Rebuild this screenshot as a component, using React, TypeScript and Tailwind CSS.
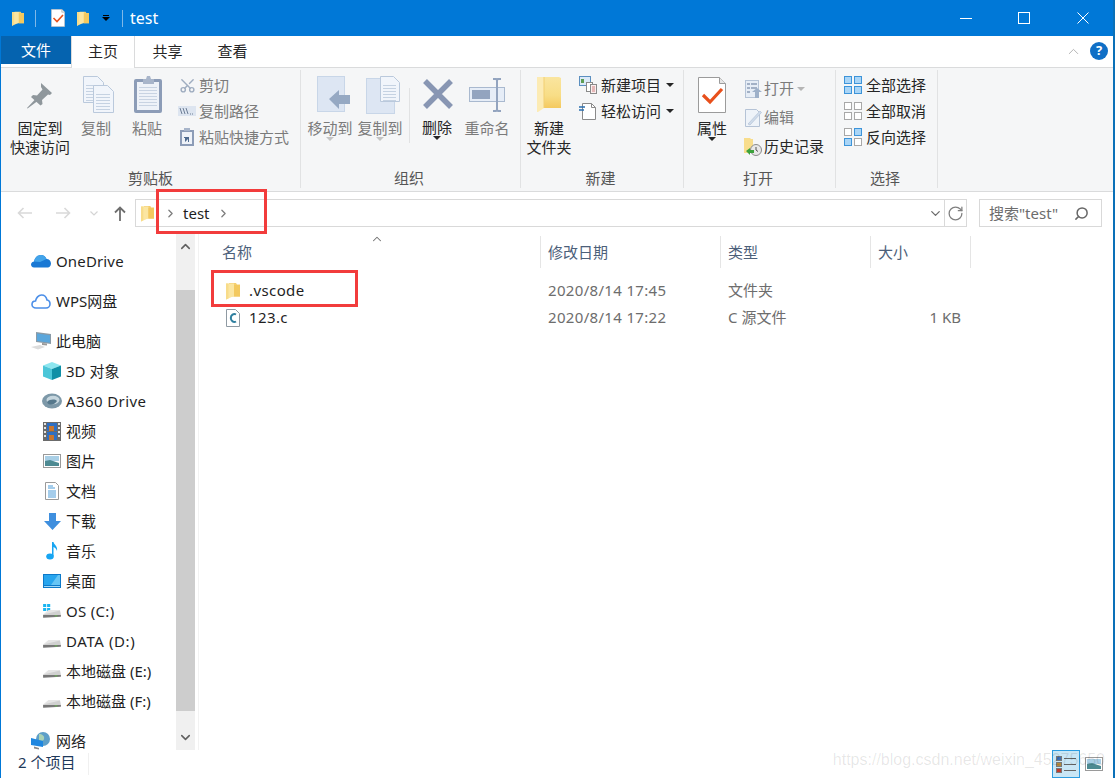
import { ReactNode } from 'react';
import { ChevronDown, ChevronRight, ChevronUp, RotateCw, Scissors, Search } from 'lucide-react';

function Folder({ className = 'w-[14px] h-[18px]' }: { className?: string }) {
  return (
    <svg viewBox="0 0 14 18" className={className}>
      <path d="M3 1h7l1 1.500h3V14.500H3z" fill="#f5cf6f" />
      <path d="M0 1.500h8V14L0 17.500z" fill="#fbe6a2" />
      <path d="M0 1.500h2.500V16.400L0 17.500z" fill="#f8dc8a" />
      <path d="M8 3h6v11.500H8z" fill="#f3c95f" />
    </svg>
  );
}

function BigFolder() {
  return (
    <svg viewBox="0 0 24 36" className="w-[24px] h-[36px]">
      <defs>
        <linearGradient id="bigFolderFace" x1="0" y1="0" x2="0" y2="1">
          <stop offset="0" stopColor="#fae59f" />
          <stop offset="0.6" stopColor="#f8dd86" />
          <stop offset="1" stopColor="#f4c95f" />
        </linearGradient>
      </defs>
      <path d="M0 0h22l2 1v30H0z" fill="url(#bigFolderFace)" />
      <path d="M0 0h7v31L1 35 0 35z" fill="#fcebb4" />
      <path d="M7 0v31" stroke="#f2cf72" />
    </svg>
  );
}

function CheckDoc({ size = 'w-[16px] h-[18px]' }: { size?: string }) {
  return (
    <svg viewBox="0 0 28 36" className={size}>
      <path d="M.5.5h21l6 6v29H.5z" fill="#fff" stroke="#9b9b9b" />
      <path d="M21.500.5v6h6" fill="#e6e6e6" stroke="#9b9b9b" />
      <path d="M5 18l7 7L24 12" fill="none" stroke="#e8501c" strokeWidth="3.200" />
    </svg>
  );
}

function Pin() {
  return (
    <svg viewBox="0 0 28 28" className="w-[28px] h-[28px]">
      <path d="M15 2l11 10-2 2-2-.5-6 5.500.5 4-2 1.500L5 16l2-2 4 .5 5.500-6L15 6z" fill="#8f979c" />
      <path d="M9 18.500L1 27l.5.5L11 20.500z" fill="#8f979c" />
    </svg>
  );
}

function Page({ x, y, w = 20, h = 28 }: { x: number; y: number; w?: number; h?: number }) {
  return (
    <g>
      <path d={`M${x}.5 ${y}.5h${w - 6}l6 6v${h - 6}h-${w}z`} fill="#f1f5fb" stroke="#bac9dc" />
      {[9, 12, 15, 18, 21, 24].map(d => (
        <path key={d} d={`M${x + 3} ${y + d}.5h${w - 6}`} stroke="#c5d2e2" />
      ))}
    </g>
  );
}

function CopyIcon() {
  return (
    <svg viewBox="0 0 31 37" className="w-[31px] h-[37px] ml-[4px]">
      <Page x={0} y={0} w={20} h={26} />
      <Page x={10} y={9} w={20} h={27} />
    </svg>
  );
}

function PasteIcon() {
  return (
    <svg viewBox="0 0 28 37" className="w-[28px] h-[37px] ml-[2px]">
      <rect x="0" y="3" width="28" height="34" rx="2" fill="#8c9cb7" />
      <rect x="3" y="6" width="22" height="28" fill="#eef2f8" />
      {[11, 14, 17, 20, 23, 26, 29].map(d => (
        <path key={d} d={`M5 ${d}.5h18`} stroke="#c8d3e2" />
      ))}
      <path d="M9 3h3l1-3h3l1 3h3v5H9z" fill="#a8b5ca" />
    </svg>
  );
}

function PathIcon() {
  return (
    <svg viewBox="0 0 18 10" className="w-[18px] h-[10px]">
      <rect width="18" height="10" fill="#dde5f0" />
      <path d="M2 2l2 6M5 2l2 6M8 2l2 6" stroke="#6d7e96" strokeWidth="1" />
      <path d="M12 8h1M14 8h1" stroke="#6d7e96" />
    </svg>
  );
}

function PasteLinkIcon() {
  return (
    <svg viewBox="0 0 14 18" className="w-[14px] h-[18px]">
      <rect y="2" width="14" height="16" fill="#8c9cb7" />
      <rect x="2" y="4" width="10" height="12" fill="#eef2f8" />
      <path d="M4 0h6v3H4z" fill="#a8b5ca" />
      <path d="M5 14v-4l-1 0 0-1h5v5h-1v-3l-3 3z" fill="#4e6a8e" />
    </svg>
  );
}

function MoveIcon() {
  return (
    <svg viewBox="0 0 33 37" className="w-[33px] h-[37px] ml-[6px]">
      <rect x=".5" y=".5" width="27" height="35" fill="#dde6f3" stroke="#c8d6e8" />
      <path d="M12 23L22 14v5h11v9H22v5z" fill="#96a9c3" />
    </svg>
  );
}

function CopyToIcon() {
  return (
    <svg viewBox="0 0 34 38" className="w-[34px] h-[38px] ml-[6px]">
      <rect x=".5" y="2.500" width="28" height="35" fill="#dde6f3" stroke="#c8d6e8" />
      <Page x={14} y={0} w={19} h={25} />
    </svg>
  );
}

function DeleteIcon() {
  return (
    <svg viewBox="0 0 32 32" className="w-[32px] h-[32px] ml-[1px]">
      <path d="M3 3l26 26M29 3L3 29" stroke="#8896b3" strokeWidth="5.500" />
    </svg>
  );
}

function RenameIcon() {
  return (
    <svg viewBox="0 0 36 34" className="w-[36px] h-[34px]">
      <rect x=".5" y="9.500" width="35" height="14" fill="#e6edf7" stroke="#a9b9cf" />
      <rect x="3" y="12" width="18" height="9" fill="#93a4bf" />
      <path d="M24 1h3l1 1 1-1h3M28 2v30M24 33h3l1-1 1 1h3" fill="none" stroke="#93a4bf" strokeWidth="2" />
    </svg>
  );
}

function NewItemIcon() {
  return (
    <svg viewBox="0 0 18 18" className="w-[18px] h-[18px]">
      <rect x=".5" y=".5" width="11" height="9" fill="#dceaf8" stroke="#5b8fc0" />
      <rect x="2" y="3" width="3" height="4" fill="#5e9e55" />
      <rect x="7.500" y="6.500" width="6" height="9" fill="#fff" stroke="#8a8a8a" />
      <rect x="11.500" y="8.500" width="6" height="9" fill="#fbeeee" stroke="#8a8a8a" />
      <path d="M13 11h3M13 13h3M13 15h3" stroke="#d08080" />
    </svg>
  );
}

function EasyAccessIcon() {
  return (
    <svg viewBox="0 0 18 18" className="w-[18px] h-[18px]">
      <path d="M3.500 1.500h9l4 4v12h-13z" fill="#fff" stroke="#8a8a8a" />
      <path d="M12.500 1.500v4h4" fill="none" stroke="#8a8a8a" />
      <path d="M0 5h6M0 8h5" stroke="#2a6fb0" strokeWidth="1.500" />
    </svg>
  );
}

function OpenIcon() {
  return (
    <svg viewBox="0 0 17 18" className="w-[17px] h-[18px]">
      <rect x=".5" y=".5" width="13" height="17" fill="#e6edf6" stroke="#b5c3d6" />
      <path d="M2 3h3v2H2zM6 3h6v2H6zM2 7h3v2H2zM6 7h6v2H6zM2 11h3v2H2z" fill="#a3b1c6" />
      <path d="M7 12l5-4 5 4h-3v6h-4v-6z" fill="#9db0c9" />
    </svg>
  );
}

function EditIcon() {
  return (
    <svg viewBox="0 0 17 18" className="w-[17px] h-[18px]">
      <path d="M.5.5h11l3 3v14H.5z" fill="#eef3f9" stroke="#b5c3d6" />
      <path d="M3 15L15 2l1.500 1.500L5 16z" fill="#cfdcec" stroke="#b5c3d6" strokeWidth=".7" />
    </svg>
  );
}

function HistoryIcon() {
  return (
    <svg viewBox="0 0 18 18" className="w-[18px] h-[18px]">
      <path d="M0 0h6l1 1h2v14H0z" fill="#f8dd8c" />
      <circle cx="12" cy="12" r="5.500" fill="#e8e8e8" stroke="#8a8a8a" />
      <path d="M12 9v3l2 1.500" stroke="#555" fill="none" />
      <path d="M2 13l4-3v2h4v3H6v2z" fill="#3ca23c" />
    </svg>
  );
}

function GridIcon({ on }: { on: number[] }) {
  const cells = [
    [0, 0],
    [10, 0],
    [0, 10],
    [10, 10],
  ];
  return (
    <svg viewBox="0 0 18 18" className="w-[18px] h-[18px]">
      {cells.map(([x, y], i) => (
        <rect
          key={i}
          x={x + 0.5}
          y={y + 0.5}
          width="7"
          height="7"
          fill={on.includes(i) ? '#a9d5f7' : '#fff'}
          stroke={on.includes(i) ? '#3d94d9' : '#a8a8a8'}
        />
      ))}
    </svg>
  );
}

function Caret({ className = '' }: { className?: string }) {
  return <span className={`inline-block w-0 h-0 border-x-[4px] border-x-transparent border-t-[4px] ${className}`} />;
}

function BigButton({
  icon,
  lines,
  dim,
  caret,
  width,
  className = '',
}: {
  icon: ReactNode;
  lines: string[];
  dim?: boolean;
  caret?: boolean;
  width: string;
  className?: string;
}) {
  return (
    <div className={`flex flex-col items-center ${width} ${className} ${dim ? 'text-[#7b7b7b]' : 'text-[#262626]'}`}>
      <div className="h-[49px] flex items-center justify-center shrink-0">{icon}</div>
      {lines.map(l => (
        <div key={l} className="leading-[19px] whitespace-nowrap">
          {l}
        </div>
      ))}
      {caret && <Caret className={`-mt-[1px] ${dim ? 'border-t-[#c4c4c4]' : 'border-t-[#262626]'}`} />}
    </div>
  );
}

function SmallButton({
  icon,
  label,
  dim,
  caret,
  height = 'h-[26px]',
  gap = 'gap-[4px]',
}: {
  icon: ReactNode;
  label: string;
  dim?: boolean;
  caret?: boolean;
  height?: string;
  gap?: string;
}) {
  return (
    <div className={`flex items-center whitespace-nowrap ${height} ${gap} ${dim ? 'text-[#7b7b7b]' : 'text-[#262626]'}`}>
      <div className="w-[18px] flex items-center justify-center shrink-0">{icon}</div>
      <span>{label}</span>
      {caret && <Caret className={`ml-[1px] ${dim ? 'border-t-[#b5b5b5]' : 'border-t-[#262626]'}`} />}
    </div>
  );
}

function Group({ label, width, labelClass = 'pr-[3px]', children }: { label: string; width: string; labelClass?: string; children: ReactNode }) {
  return (
    <div className={`${width} h-[118px] flex flex-col border-r border-[#e1e2e3] shrink-0`}>
      <div className="h-[98px] flex">{children}</div>
      <div className={`h-[20px] leading-[20px] text-center text-[#555] ${labelClass}`}>{label}</div>
    </div>
  );
}

function Ribbon() {
  return (
    <div className="h-[124px] bg-[#f5f6f7] border-b border-[#dadbdc] pt-[2px] flex text-[15px]">
      <Group label="剪贴板" width="w-[300px]" labelClass="">
        <BigButton icon={<Pin />} lines={['固定到', '快速访问']} width="w-[60px]" className="ml-[9px]" />
        <BigButton icon={<CopyIcon />} lines={['复制']} dim width="w-[40px]" className="ml-[6px]" />
        <BigButton icon={<PasteIcon />} lines={['粘贴']} dim width="w-[40px]" className="ml-[11px]" />
        <div className="ml-[11px] pt-[2px]">
          <SmallButton dim label="剪切" gap="gap-[3px]" icon={<Scissors size={17} className="text-[#9fadc0] -rotate-90" />} />
          <SmallButton dim label="复制路径" gap="gap-[3px]" icon={<PathIcon />} />
          <SmallButton dim label="粘贴快捷方式" gap="gap-[3px]" icon={<PasteLinkIcon />} />
        </div>
      </Group>
      <Group label="组织" width="w-[220px]">
        <BigButton icon={<MoveIcon />} lines={['移动到']} dim caret width="w-[50px]" className="ml-[4px]" />
        <BigButton icon={<CopyToIcon />} lines={['复制到']} dim caret width="w-[50px]" />
        <div className="w-px h-[55px] mt-[18px] ml-[4px] bg-[#e1e2e3]" />
        <BigButton icon={<DeleteIcon />} lines={['删除']} caret width="w-[40px]" className="ml-[7px] -mt-[1px]" />
        <BigButton icon={<RenameIcon />} lines={['重命名']} dim width="w-[50px]" className="ml-[5px]" />
      </Group>
      <Group label="新建" width="w-[163px]">
        <BigButton icon={<BigFolder />} lines={['新建', '文件夹']} width="w-[50px]" className="ml-[3px]" />
        <div className="ml-[5px] pt-[2px]">
          <SmallButton label="新建项目" caret icon={<NewItemIcon />} />
          <SmallButton label="轻松访问" caret icon={<EasyAccessIcon />} />
        </div>
      </Group>
      <Group label="打开" width="w-[152px]">
        <BigButton icon={<CheckDoc size="w-[28px] h-[36px]" />} lines={['属性']} caret width="w-[40px]" className="ml-[8px]" />
        <div className="ml-[12px] pt-[4px]">
          <SmallButton dim label="打开" caret height="h-[29px]" gap="gap-[2px]" icon={<OpenIcon />} />
          <SmallButton dim label="编辑" height="h-[29px]" gap="gap-[2px]" icon={<EditIcon />} />
          <SmallButton label="历史记录" height="h-[29px]" gap="gap-[2px]" icon={<HistoryIcon />} />
        </div>
      </Group>
      <Group label="选择" width="w-[102px]">
        <div className="ml-[8px] pt-[2px]">
          <SmallButton label="全部选择" icon={<GridIcon on={[0, 1, 2, 3]} />} />
          <SmallButton label="全部取消" icon={<GridIcon on={[]} />} />
          <SmallButton label="反向选择" icon={<GridIcon on={[1, 2]} />} />
        </div>
      </Group>
    </div>
  );
}

function AddressBar() {
  return (
    <div className="h-[40px] flex items-start pt-[7px] text-[15px] bg-white">
      <div className="w-[134px] h-[28px] flex items-center shrink-0">
        <svg viewBox="0 0 15 12" className="ml-[16px] w-[15px] h-[12px] shrink-0">
          <path d="M15 6H1.500M6.500 1L1.500 6l5 5" fill="none" stroke="#d9d9d9" strokeWidth="1.600" />
        </svg>
        <svg viewBox="0 0 15 12" className="ml-[24px] w-[15px] h-[12px] shrink-0">
          <path d="M0 6h13.500M8.500 1l5 5-5 5" fill="none" stroke="#d9d9d9" strokeWidth="1.600" />
        </svg>
        <svg viewBox="0 0 8 5" className="ml-[19px] w-[8px] h-[5px] shrink-0">
          <path d="M.5.5L4 4 7.500.5" fill="none" stroke="#d4d4d4" strokeWidth="1.200" />
        </svg>
        <svg viewBox="0 0 12 15" className="ml-[16px] w-[12px] h-[15px] shrink-0">
          <path d="M6 15V1.500M1 6.500l5-5 5 5" fill="none" stroke="#6e6e6e" strokeWidth="1.800" />
        </svg>
      </div>
      <div className="w-[832px] h-[28px] flex items-center border border-[#d9d9d9] shrink-0">
        <Folder className="ml-[5px] w-[13px] h-[17px]" />
        <ChevronRight size={13} strokeWidth={2.4} className="ml-[10px] text-[#7d7d7d]" />
        <span className="ml-[6px] text-[#1f1f1f]">test</span>
        <ChevronRight size={13} strokeWidth={2.4} className="ml-[8px] text-[#7d7d7d]" />
        <div className="flex-1" />
        <ChevronDown size={15} strokeWidth={2} className="text-[#6b6b6b]" />
        <div className="w-px h-full bg-[#d9d9d9] ml-[1px]" />
        <RotateCw size={17} strokeWidth={1.8} className="mx-[2px] text-[#7f7f7f]" />
      </div>
      <div className="ml-[12px] w-[123px] h-[28px] flex items-center border border-[#d9d9d9] shrink-0 pl-[9px] pr-[12px] justify-between">
        <span className="text-[#6d6d6d]">搜索"test"</span>
        <Search size={15} strokeWidth={2.4} className="text-[#666] -scale-x-100" />
      </div>
    </div>
  );
}

function DriveIcon({ win }: { win?: boolean }) {
  return (
    <svg viewBox="0 0 20 18" className="w-[18px] h-[16px]">
      {win && <path d="M0 1h3.500v3.500H0zM4.500 1H8v3.500H4.500zM0 5.500h3.500V9H0zM4.500 5.500H8V9H4.500z" fill="#19b5f1" />}
      <path d="M0 13l6-5h13l-1 5z" fill="#e6e6e6" />
      <path d="M19 8.500L20 13v1.500L0 16v-3z" fill="#d0d0d0" />
      <path d="M0 13.500h20v2L0 16.500z" fill="#777" />
      <rect x="13" y="14" width="3" height="1" fill="#69c24f" />
    </svg>
  );
}

const navIcons: Record<string, ReactNode> = {
  onedrive: (
    <svg viewBox="0 0 20 14" className="w-[20px] h-[14px]">
      <path d="M3 13.500C1 13.500 0 12 0 10.500 0 8.500 2 7.500 3 7.500 4 3 7 1 10 1c2.500 0 4.500 1.500 5.500 4 2.500 0 4.500 2 4.500 4.500s-2 4-3 4z" fill="#1978d4" />
      <path d="M3 7.500C4 3 7 1 10 1c2.500 0 4.500 1.500 5.500 4L9 8z" fill="#43a4ea" />
    </svg>
  ),
  wps: (
    <svg viewBox="0 0 20 15" className="w-[20px] h-[15px]">
      <path d="M5 14C2.500 14 1 12.500 1 10.500S2.500 7 4.500 7C5 4 7.500 1 10.500 1c3 0 5 2.500 5.500 5 2 .2 3 2 3 4s-1.500 4-4 4z" fill="#fff" stroke="#4c8fe8" strokeWidth="1.600" />
    </svg>
  ),
  pc: (
    <svg viewBox="0 0 20 18" className="w-[20px] h-[18px]">
      <path d="M5 0l15 2v10L5 10z" fill="#8a9aa6" />
      <path d="M6 1.500l13 1.700v7.600L6 9z" fill="#5ba7dc" />
      <path d="M0 15l9-2 5 2-7 2.500z" fill="#dcdcdc" />
      <path d="M11 11l5 .6v2L11 13z" fill="#9a9a9a" />
    </svg>
  ),
  cube: (
    <svg viewBox="0 0 18 18" className="w-[18px] h-[18px]">
      <path d="M9 0l9 3.500L9 7 0 3.500z" fill="#8de6ef" />
      <path d="M0 3.500L9 7v11l-9-3.500z" fill="#4cc6d8" />
      <path d="M18 3.500L9 7v11l9-3.500z" fill="#0f8fa6" />
    </svg>
  ),
  a360: (
    <svg viewBox="0 0 20 16" className="w-[20px] h-[16px]">
      <ellipse cx="10" cy="8" rx="10" ry="7.500" fill="#7d98a8" />
      <ellipse cx="11" cy="7" rx="6.500" ry="4.200" fill="#c6d6de" />
      <path d="M5 9c3-3 8-3 10-1-1 2-4 4-7 3.500-1.500-.2-2.500-1.200-3-2.500z" fill="#56788c" />
    </svg>
  ),
  video: (
    <svg viewBox="0 0 18 19" className="w-[18px] h-[19px]">
      <rect width="18" height="19" fill="#6b6b6b" />
      <path d="M1 1h2v2H1zM1 5h2v2H1zM1 9h2v2H1zM1 13h2v2H1zM15 1h2v2h-2zM15 5h2v2h-2zM15 9h2v2h-2zM15 13h2v2h-2z" fill="#e5e5e5" />
      <rect x="4" y="1" width="10" height="8" fill="#2f6fc2" />
      <rect x="4" y="10" width="10" height="8" fill="#2f6fc2" />
      <path d="M6 4h5v5H6zM6 13h5v5H6z" fill="#c9762e" />
    </svg>
  ),
  picture: (
    <svg viewBox="0 0 18 14" className="w-[18px] h-[14px]">
      <rect x=".5" y=".5" width="17" height="13" fill="#fff" stroke="#9a9a9a" />
      <rect x="2" y="2" width="14" height="5" fill="#a9cfe6" />
      <path d="M2 7l5-1 9 3v3H2z" fill="#4d8a92" />
    </svg>
  ),
  doc: (
    <svg viewBox="0 0 14 18" className="w-[14px] h-[18px]">
      <path d="M.5.5h10l3 3v14H.5z" fill="#fff" stroke="#9a9a9a" />
      <path d="M3 4h5M3 6h7M3 9h8M3 11h8M3 13h8M3 15h8" stroke="#4a9bd8" />
    </svg>
  ),
  download: (
    <svg viewBox="0 0 17 17" className="w-[17px] h-[17px]">
      <path d="M5 0h7v8h5l-8.500 9L0 8h5z" fill="#3f8fde" />
    </svg>
  ),
  music: (
    <svg viewBox="0 0 12 18" className="w-[12px] h-[18px]">
      <ellipse cx="4" cy="14.500" rx="3.800" ry="3" fill="#17a5f2" />
      <path d="M6 14V0h1.500c.5 3 4.500 4 3.500 9-.5-2.500-2.500-3.500-3.500-4v9z" fill="#17a5f2" />
    </svg>
  ),
  desktop: (
    <svg viewBox="0 0 18 14" className="w-[18px] h-[14px]">
      <rect width="18" height="14" fill="#0d79c9" />
      <path d="M1 1h16v10H1z" fill="#27a5ee" />
      <path d="M8 11l7-10h2v10z" fill="#66c5f5" />
      <path d="M1 12h16v1H1z" fill="#9fd8f7" />
    </svg>
  ),
  network: (
    <svg viewBox="0 0 20 18" className="w-[20px] h-[18px]">
      <circle cx="12" cy="7" r="7" fill="#5d9fc8" />
      <path d="M8 2c3 0 6 2 5 5s-3 1-5 2z" fill="#a9d2b5" />
      <path d="M0 6l12 3v6L0 13z" fill="#1f87e0" />
      <path d="M3 14.500l5 1.500v1.500l-5-1z" fill="#8a8a8a" />
    </svg>
  ),
};

function NavRow({
  icon,
  label,
  sub,
  className = '',
  labelClass = '',
}: {
  icon: ReactNode;
  label: string;
  sub?: boolean;
  className?: string;
  labelClass?: string;
}) {
  return (
    <div className={`h-[30px] flex items-center whitespace-nowrap shrink-0 text-[#1f1f1f] ${sub ? 'pl-[41px]' : 'pl-[30px]'} ${className}`}>
      <div className={`flex items-center justify-center shrink-0 ${sub ? 'w-[20px] mr-[4px]' : 'w-[20px] mr-[5px]'}`}>{icon}</div>
      <span className={labelClass}>{label}</span>
    </div>
  );
}

function NavPane() {
  return (
    <div className="w-[175px] shrink-0 flex flex-col pt-[14px] overflow-hidden text-[15px]">
      <NavRow icon={navIcons.onedrive} label="OneDrive" labelClass="tracking-[0.15px]" />
      <NavRow icon={navIcons.wps} label="WPS网盘" className="mt-[10px]" />
      <NavRow icon={navIcons.pc} label="此电脑" className="mt-[10px]" />
      <NavRow sub icon={navIcons.cube} label="3D 对象" />
      <NavRow sub icon={navIcons.a360} label="A360 Drive" labelClass="tracking-[0.4px]" />
      <NavRow sub icon={navIcons.video} label="视频" />
      <NavRow sub icon={navIcons.picture} label="图片" />
      <NavRow sub icon={navIcons.doc} label="文档" />
      <NavRow sub icon={navIcons.download} label="下载" />
      <NavRow sub icon={navIcons.music} label="音乐" />
      <NavRow sub icon={navIcons.desktop} label="桌面" />
      <NavRow sub icon={<DriveIcon win />} label="OS (C:)" labelClass="tracking-[0.3px]" />
      <NavRow sub icon={<DriveIcon />} label="DATA (D:)" labelClass="tracking-[0.6px]" />
      <NavRow sub icon={<DriveIcon />} label="本地磁盘 (E:)" />
      <NavRow sub icon={<DriveIcon />} label="本地磁盘 (F:)" />
      <NavRow icon={navIcons.network} label="网络" className="mt-[10px]" />
    </div>
  );
}

function ScrollBar() {
  return (
    <div className="w-[19px] shrink-0 bg-[#f0f0f0] flex flex-col">
      <div className="h-[58px] flex items-start justify-center pt-[7px]">
        <ChevronUp size={15} strokeWidth={2.5} className="text-[#606060]" />
      </div>
      <div className="flex-1 bg-[#cdcdcd]" />
      <div className="h-[39px] flex items-end justify-center pb-[5px]">
        <ChevronDown size={15} strokeWidth={2.5} className="text-[#606060]" />
      </div>
    </div>
  );
}

function CFileIcon() {
  return (
    <svg viewBox="0 0 14 18" className="w-[14px] h-[18px]">
      <path d="M.5.5h9l4 4v13H.5z" fill="#fff" stroke="#8f9aa3" />
      <path d="M10 5.500a3.500 4 0 1 0 0 7" fill="none" stroke="#2f7f9f" strokeWidth="2" />
    </svg>
  );
}

const headerCols = [
  { label: '名称', cls: 'w-[342px] pl-[23px]' },
  { label: '修改日期', cls: 'w-[180px] pl-[7px]' },
  { label: '类型', cls: 'w-[150px] pl-[7px]' },
  { label: '大小', cls: 'w-[100px] pl-[7px]' },
];

function FileRow({ icon, name, date, type, size }: { icon: ReactNode; name: string; date: string; type: string; size?: string }) {
  return (
    <div className="h-[27px] flex items-center">
      <div className="w-[342px] pl-[27px] flex items-center text-[#1f1f1f]">
        <div className="w-[23px] flex items-center shrink-0">{icon}</div>
        <span className="tracking-[0.4px]">{name}</span>
      </div>
      <div className="w-[180px] pl-[7px] tracking-[0.33px]">{date}</div>
      <div className="w-[150px] pl-[7px]">{type}</div>
      <div className="w-[100px] pr-[10px] text-right">{size}</div>
    </div>
  );
}

function FileList() {
  return (
    <div className="flex-1 text-[15px] ml-[3px] border-l border-[#f2f2f2] text-[#6d6d6d]">
      <div className="relative flex h-[32px] mt-[4px]">
        {headerCols.map(c => (
          <div key={c.label} className={`${c.cls} h-full flex items-center border-r border-[#e5e5e5] text-[#4c607a]`}>
            {c.label}
          </div>
        ))}
        <ChevronUp size={14} strokeWidth={1.8} className="absolute left-[171px] -top-[4px] text-[#707070]" />
      </div>
      <div className="mt-[9px]">
        <FileRow icon={<Folder />} name=".vscode" date="2020/8/14 17:45" type="文件夹" />
        <FileRow icon={<CFileIcon />} name="123.c" date="2020/8/14 17:22" type="C 源文件" size="1 KB" />
      </div>
    </div>
  );
}

function StatusBar() {
  return (
    <div className="h-[28px] flex items-center text-[15px] text-[#1e395b]">
      <div className="w-[88px] h-[22px] pl-[17px] pb-[4px] flex items-center border-r border-[#f0f0f0]">2 个项目</div>
      <div className="flex-1" />
      <div className="w-[28px] h-[28px] bg-[#c9e6f5] border border-[#2c9ce0] flex flex-col justify-center items-center gap-[1px] mr-[5px]">
        {['#3d6fb5', '#b58a3d', '#c0392b'].map(c => (
          <div key={c} className="flex items-center gap-[2px]">
            <div className="w-[6px] h-[5px] border border-[#777]" style={{ background: c }} />
            <div className="w-[12px] h-px bg-[#666]" />
          </div>
        ))}
      </div>
      <svg viewBox="0 0 18 14" className="w-[18px] h-[14px] mr-[10px]">
        <rect x=".5" y=".5" width="17" height="13" fill="#fff" stroke="#9a9a9a" />
        <rect x="2" y="2" width="14" height="5" fill="#a9cfe6" />
        <path d="M2 7l5-1 9 3v3H2z" fill="#4d8a92" />
      </svg>
    </div>
  );
}

export default function App() {
  return (
    <div className="relative w-[1115px] h-[778px] overflow-hidden bg-white border-l border-r-2 border-l-[#0078d7] border-r-[#0a70b8] font-['Noto_Sans','Noto_Sans_CJK_SC',sans-serif]">
      <div className="h-[36px] bg-[#0078d7] text-white flex items-center text-[16px]">
        <Folder className="ml-[11px] w-[12px] h-[17px]" />
        <div className="w-px h-[17px] bg-[#7fb8e8] ml-[11px]" />
        <div className="ml-[15px] flex"><CheckDoc size="w-[14px] h-[18px]" /></div>
        <Folder className="ml-[12px] w-[12px] h-[17px]" />
        <div className="ml-[13px] flex flex-col items-center gap-[1px]">
          <div className="w-[6px] h-px bg-black" />
          <Caret className="border-t-black" />
        </div>
        <div className="w-px h-[17px] bg-[#7fb8e8] ml-[12px]" />
        <span className="ml-[7px]">test</span>
        <div className="flex-1" />
        <div className="w-[12px] h-px bg-white mr-[46px]" />
        <div className="w-[12px] h-[12px] border border-white mr-[47px]" />
        <svg viewBox="0 0 12 12" className="w-[12px] h-[12px] mr-[24px]">
          <path d="M.5.5l11 11M11.500.5l-11 11" stroke="#fff" strokeWidth="1" />
        </svg>
      </div>

      <div className="h-[32px] flex border-b border-[#dadbdc] text-[15px] text-[#262626]">
        <div className="w-[70px] h-[28px] bg-[#0563af] text-white flex items-center justify-center">文件</div>
        <div className="w-[64px] h-[32px] bg-white border-x border-[#dadbdc] flex items-center justify-center pb-[1px]">主页</div>
        <div className="w-[65px] flex items-center justify-center pb-[1px]">共享</div>
        <div className="w-[65px] flex items-center justify-center pb-[1px]">查看</div>
        <div className="flex-1 flex items-center justify-end pb-[1px] pr-[5px]">
          <ChevronUp size={17} strokeWidth={1.2} className="text-[#a8a8a8] mr-[8px]" />
          <div className="w-[18px] h-[18px] rounded-full bg-[#0f6fc6] text-white text-[13px] font-bold flex items-center justify-center">?</div>
        </div>
      </div>

      <Ribbon />
      <AddressBar />

      <div className="h-[518px] flex">
        <NavPane />
        <ScrollBar />
        <FileList />
      </div>

      <StatusBar />

      <div className="absolute left-[155px] top-[189px] w-[111px] h-[45px] border-[3px] border-[#f23c3c]" />
      <div className="absolute left-[210px] top-[270px] w-[147px] h-[37px] border-[3px] border-[#f23c3c]" />
      <div className="absolute right-[8px] bottom-[8px] text-[16px] leading-[20px] text-black/10 font-['Liberation_Sans',sans-serif] whitespace-nowrap">
        https://blog.csdn.net/weixin_45275650
      </div>
    </div>
  );
}
